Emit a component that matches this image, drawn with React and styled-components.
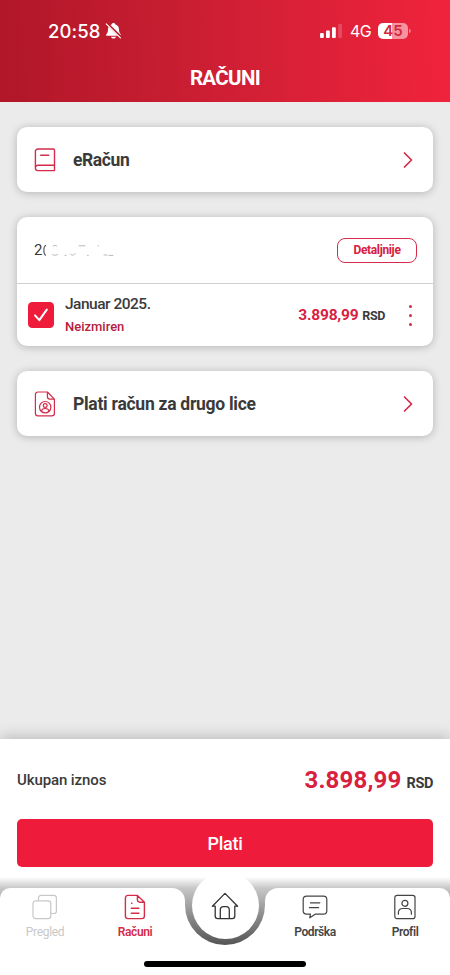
import React, { useState } from 'react'
import styled, { createGlobalStyle } from 'styled-components';

const red = '#ee1b3b';
const redText = '#d8203f';
const redLine = '#d42c4a';
const dark = '#3a3a3a';

const GlobalStyle = createGlobalStyle`
  * {
    box-sizing: border-box;
  }
  body {
    margin: 0;
    background-color: #ebebeb;
    font-family: Roboto, 'Noto Sans', sans-serif;
    color: ${dark};
  }
  button {
    font-family: inherit;
    padding: 0;
    border: none;
    background: none;
    cursor: pointer;
  }
`
const Screen = styled.div`
  width: 450px;
  height: 975px;
  margin: 0 auto;
  display: flex;
  flex-direction: column;
  overflow: hidden;
  background-color: #ebebeb;
`
const Header = styled.header`
  height: 102px;
  flex-shrink: 0;
  background: linear-gradient(88deg, #b01728 0%, #cf1f34 50%, #f0233c 100%);
  color: white;
`
const StatusBar = styled.div`
  height: 61px;
  padding: 0 39px 0 48px;
  display: flex;
  align-items: center;
  justify-content: space-between;
  font-family: Inter, sans-serif;
`
const StatusGroup = styled.div`
  display: flex;
  align-items: center;
  gap: ${props => props.$gap}px;
`
const Clock = styled.span`
  font-size: 18.5px;
  font-weight: 500;
  letter-spacing: 0.1px;
`
const Network = styled.span`
  font-size: 16px;
  letter-spacing: -0.6px;
`
const Battery = styled.span`
  width: 30px;
  height: 16px;
  border-radius: 5px;
  background: linear-gradient(90deg, white 46%, #f7929e 46%);
  color: #cf2740;
  font-size: 15px;
  font-weight: 600;
  line-height: 16px;
  text-align: center;
`
const Title = styled.h1`
  margin: 0;
  padding-top: 5px;
  font-size: 20.5px;
  line-height: 24px;
  font-weight: 700;
  text-align: center;
  letter-spacing: -0.65px;
`
const Content = styled.main`
  flex: 1;
  padding: 25px 17px;
  display: flex;
  flex-direction: column;
  gap: 25px;
`
const Card = styled.section`
  background-color: white;
  border-radius: 10px;
  box-shadow: 0 1px 9px rgba(0,0,0,0.24);
`
const LinkCard = styled(Card)`
  height: 65px;
  padding: 0 20px 0 17px;
  display: flex;
  align-items: center;
`
const LinkText = styled.span`
  flex: 1;
  padding: 1px 0 0 17px;
  font-size: 17.5px;
  font-weight: 700;
  letter-spacing: ${props => props.$spacing}px;
`
const AccountRow = styled.div`
  height: 67px;
  padding: 0 16px 0 17px;
  display: flex;
  align-items: center;
  justify-content: space-between;
  border-bottom: 1px solid #cfcfcf;
`
const AccountNumber = styled.div`
  display: flex;
  align-items: center;
  font-size: 15px;
`
const DetailsButton = styled.button`
  width: 80px;
  height: 25px;
  border: 1px solid ${redLine};
  border-radius: 8px;
  color: ${redText};
  font-size: 12px;
  font-weight: 700;
  letter-spacing: -0.35px;
`
const BillRow = styled.div`
  height: 62px;
  padding: 0 16px 0 11px;
  display: flex;
  align-items: center;
`
const CheckBox = styled.button`
  width: 26px;
  height: 26px;
  border-radius: 4px;
  display: flex;
  align-items: center;
  justify-content: center;
  background-color: ${props => props.$checked ? red : 'white'};
  border: 1px solid ${red};
`
const BillInfo = styled.div`
  flex: 1;
  padding-left: 11px;
  display: flex;
  flex-direction: column;
`
const BillMonth = styled.span`
  font-size: 15.5px;
  line-height: 22px;
  font-weight: 500;
  letter-spacing: -0.5px;
`
const BillStatus = styled.span`
  padding-top: 1px;
  font-size: 13px;
  line-height: 21px;
  font-weight: 500;
  color: #b5203f;
`
const Amount = styled.span`
  color: ${redText};
  font-size: ${props => props.$size}px;
  font-weight: 700;
  letter-spacing: ${props => props.$spacing}px;
`
const Currency = styled.span`
  padding-left: ${props => props.$gap}px;
  color: ${dark};
  font-size: ${props => props.$size}px;
  font-weight: 700;
  letter-spacing: -0.4px;
`
const MoreButton = styled.button`
  margin-left: 18px;
  width: 14px;
  height: 26px;
  display: flex;
  flex-direction: column;
  align-items: center;
  justify-content: center;
  gap: 6px;
`
const Dot = styled.span`
  width: 3px;
  height: 3px;
  border-radius: 50%;
  background-color: ${redLine};
`
const PayPanel = styled.section`
  height: 138px;
  flex-shrink: 0;
  padding: 16px 17px 0;
  background-color: white;
  box-shadow: 0 -2px 14px rgba(0,0,0,0.22);
`
const TotalRow = styled.div`
  height: 49px;
  display: flex;
  align-items: center;
  justify-content: space-between;
`
const TotalLabel = styled.span`
  font-size: 15px;
  font-weight: 500;
  letter-spacing: -0.1px;
`
const PayButton = styled.button`
  margin-top: 15px;
  width: 100%;
  height: 48px;
  border-radius: 5px;
  background-color: ${red};
  color: white;
  font-size: 18px;
  font-weight: 500;
  letter-spacing: -0.3px;
`
const NavShade = styled.footer`
  height: 98px;
  flex-shrink: 0;
  padding-top: 11px;
  background: linear-gradient(180deg, white 0, #c8c8c8 11px, #a0a0a0 28px, white 28px);
`
const NavBar = styled.nav`
  height: 65px;
  display: grid;
  grid-template-columns: 185px 80px 185px;
`
const TabGroup = styled.div`
  display: grid;
  grid-template-columns: 90px 90px;
  justify-content: ${props => props.$end ? 'end' : 'start'};
  padding: ${props => props.$end ? '0 0 0 5px' : '0 5px 0 0'};
  background-color: white;
  border-radius: ${props => props.$end ? '13px 10px 0 0' : '10px 13px 0 0'};
`
const Tab = styled.button`
  padding-top: 6px;
  display: flex;
  flex-direction: column;
  align-items: center;
  gap: 3px;
  color: ${props => props.$color};
  font-size: 12px;
  line-height: 18px;
  font-weight: ${props => props.$light ? 400 : 600};
  letter-spacing: ${props => props.$light ? -0.3 : -0.4}px;
`
const HomeSlot = styled.div`
  background: linear-gradient(180deg, #c8c8c8 0, #a0a0a0 17px, white 17px);
`
const HomeNotch = styled.div`
  height: 57px;
  border-radius: 0 0 40px 40px;
  background: linear-gradient(180deg, #c8c8c8, #8a8a8a 50%, #555555);
  display: flex;
  justify-content: center;
`
const HomeButton = styled.button`
  width: 67px;
  height: 67px;
  margin-top: -16px;
  flex-shrink: 0;
  border-radius: 50%;
  background-color: white;
  display: flex;
  align-items: center;
  justify-content: center;
`
const HomeIndicator = styled.div`
  width: 162px;
  height: 6px;
  margin: 8px auto 0;
  border-radius: 3px;
  background-color: black;
`

const Icon = ({ w, h, color = 'currentColor', width = 1.2, children }) => (
  <svg width={w} height={h} viewBox={`0 0 ${w} ${h}`} fill="none" stroke={color}
    strokeWidth={width} strokeLinecap="round" strokeLinejoin="round">
    {children}
  </svg>
)

const BellOff = () => (
  <Icon w={17} h={18} color="none">
    <path fill="white" d="M8.500 1c1 0 1.700.6 1.900 1.400 2.400.7 3.600 2.500 3.600 4.900 0 2.700.5 3.800 1.600 4.900.6.6.3 1.600-.6 1.600H2c-.9 0-1.200-1-.6-1.600C2.500 11.100 3 10 3 7.300c0-2.400 1.200-4.200 3.600-4.900C6.800 1.600 7.500 1 8.500 1z" />
    <path fill="white" d="M6 14.700h5c-.2 1-1.200 1.800-2.500 1.800S6.200 15.700 6 14.700z" />
    <path stroke="#bf1b2e" strokeWidth="2.600" d="M1.600 1.300L16 15.200" />
    <path stroke="white" strokeWidth="1.200" d="M1.200 1.900L15.400 15.900" />
  </Icon>
)

const Signal = () => (
  <Icon w={24} h={16} color="none">
    <rect x="1" y="10" width="3.800" height="5" rx="1.100" fill="white" />
    <rect x="7" y="7.500" width="3.800" height="7.500" rx="1.100" fill="white" />
    <rect x="13" y="4.200" width="3.800" height="10.800" rx="1.100" fill="white" />
    <rect x="19.200" y="1" width="3.800" height="14" rx="1.100" fill="#e44a60" />
  </Icon>
)

const BatteryTip = () => (
  <Icon w={2} h={6} color="none">
    <path d="M0 .8c1.2.4 1.8 1.200 1.8 2.200S1.200 4.800 0 5.200z" fill="#f58694" />
  </Icon>
)

const BookIcon = () => (
  <Icon w={22} h={26} color={redLine} width={1.4}>
    <path d="M20.500 18.300V3.200c0-.7-.5-1.200-1.200-1.200H4C2.500 2 1.400 3.100 1.400 4.600V21c0 1.500 1.100 2.600 2.600 2.600h16.500v-5.300H4C2.600 18.300 1.400 19.400 1.400 20.800M6.700 8.200h8" />
  </Icon>
)

const PersonFileIcon = () => (
  <Icon w={22} h={26} color={redLine}>
    <path d="M13.400 1H4C2.500 1 1.400 2.100 1.400 3.600v18.600c0 1.500 1.100 2.600 2.600 2.600h13.800c1.500 0 2.600-1.100 2.600-2.600V8.200zM13.400 1v4.600c0 1.500 1.100 2.600 2.600 2.600h4.400" />
    <circle cx="11.200" cy="16.200" r="5.700" />
    <circle cx="11.200" cy="14.500" r="1.900" />
    <path d="M7.400 20.200c.3-1.800 1.700-2.700 3.800-2.700s3.500.9 3.800 2.700" />
  </Icon>
)

const Chevron = () => (
  <Icon w={10} h={18} color={redLine} width={1.7}>
    <path d="M1.500 2l7 7-7 7" />
  </Icon>
)

const CheckIcon = () => (
  <Icon w={16} h={14} color="white" width={2}>
    <path d="M2 7.400l4.300 4.800L13.800 1.600" />
  </Icon>
)

// leftover strokes of the masked account digits
const MaskedDigits = () => (
  <Icon w={74} h={14} color="#b0b0b0" width={0.9}>
    <path stroke="#555" strokeWidth="1.100" d="M3.600 2.400C1.400 3.400 1.200 10.600 3.400 12.200" />
    <path d="M11 3.200c1.200-1.300 3-1.300 4 0M10.500 11.600c1.500 1 4 1 5.300-.4M23 12.400h1M28.500 11c1.200 1.700 3.600 1.500 4.700-.4M37 2.800h6M45.500 12.400h.8M62 12h3M67 12.400h4M56 2.800h.5" />
  </Icon>
)

const OverviewIcon = () => (
  <Icon w={26} h={26}>
    <rect x="1" y="6.800" width="17.800" height="17.800" rx="2.600" />
    <path d="M6.500 6.600V4c0-1.500 1.100-2.600 2.600-2.600h12.700c1.500 0 2.600 1.100 2.600 2.600v12.900c0 1.500-1.100 2.600-2.600 2.600h-2.600" />
  </Icon>
)

const BillIcon = () => (
  <Icon w={22} h={26} width={1.400}>
    <path d="M13.400 1.400H4c-1.500 0-2.600 1.100-2.600 2.600v18c0 1.500 1.100 2.600 2.600 2.600h13.800c1.500 0 2.600-1.100 2.600-2.600V8.200zM13.400 1.400v4.200c0 1.500 1.100 2.600 2.600 2.600h4.400M7.600 9.200h.4M7.300 14.300h7.600M7.300 19.200h7.600" />
  </Icon>
)

const HomeIcon = () => (
  <Icon w={28} h={28} color="#333" width={1.3}>
    <path d="M1.400 14.200L14 1.400l12.600 12.800M1.400 14.200h2.800V24c0 1.500 1.100 2.600 2.600 2.600h14.400c1.500 0 2.600-1.100 2.600-2.600v-9.800h2.800M9.300 26.500v-8.700c0-2 1.300-3.200 3.200-3.200h2.600c1.900 0 3.200 1.200 3.200 3.200v8.700" />
  </Icon>
)

const ChatIcon = () => (
  <Icon w={26} h={26}>
    <path d="M4.600 2.200h16.800c2 0 3.400 1.400 3.400 3.400v11.200c0 2-1.400 3.400-3.400 3.400h-8.200L7.800 23.800l.6-3.600H4.600c-2 0-3.400-1.400-3.400-3.400V5.600c0-2 1.400-3.400 3.400-3.400zM8.400 8.800h9.400M7.400 13.600h9.200" />
  </Icon>
)

const ProfileIcon = () => (
  <Icon w={22} h={26}>
    <rect x=".8" y="1.400" width="20.200" height="23.200" rx="2.200" />
    <circle cx="10.900" cy="9.300" r="3" />
    <path d="M4.400 20.200v-1.400c0-2.700 1.700-4.300 4.300-4.300h4.400c2.600 0 4.300 1.600 4.300 4.300v1.400" />
  </Icon>
)

const App = () => {
  const [checked, setChecked] = useState(true)

  return (
    <Screen>
      <GlobalStyle/>
      <Header>
        <StatusBar>
          <StatusGroup $gap={4}>
            <Clock>20:58</Clock>
            <BellOff/>
          </StatusGroup>
          <StatusGroup $gap={7}>
            <Signal/>
            <Network>4G</Network>
            <StatusGroup $gap={1}>
              <Battery>45</Battery>
              <BatteryTip/>
            </StatusGroup>
          </StatusGroup>
        </StatusBar>
        <Title>RAČUNI</Title>
      </Header>

      <Content>
        <LinkCard>
          <BookIcon/>
          <LinkText $spacing={-0.4}>eRačun</LinkText>
          <Chevron/>
        </LinkCard>

        <Card>
          <AccountRow>
            <AccountNumber>
              2
              <MaskedDigits/>
            </AccountNumber>
            <DetailsButton>Detaljnije</DetailsButton>
          </AccountRow>
          <BillRow>
            <CheckBox $checked={checked} onClick={()=>setChecked(!checked)}>
              {checked && <CheckIcon/>}
            </CheckBox>
            <BillInfo>
              <BillMonth>Januar 2025.</BillMonth>
              <BillStatus>Neizmiren</BillStatus>
            </BillInfo>
            <Amount $size={15.5} $spacing={-0.2}>
              3.898,99<Currency $size={12.5} $gap={4}>RSD</Currency>
            </Amount>
            <MoreButton>
              <Dot/>
              <Dot/>
              <Dot/>
            </MoreButton>
          </BillRow>
        </Card>

        <LinkCard>
          <PersonFileIcon/>
          <LinkText $spacing={-0.27}>Plati račun za drugo lice</LinkText>
          <Chevron/>
        </LinkCard>
      </Content>

      <PayPanel>
        <TotalRow>
          <TotalLabel>Ukupan iznos</TotalLabel>
          <Amount $size={24} $spacing={0.2}>
            3.898,99<Currency $size={14.5} $gap={5}>RSD</Currency>
          </Amount>
        </TotalRow>
        <PayButton>Plati</PayButton>
      </PayPanel>

      <NavShade>
        <NavBar>
          <TabGroup>
            <Tab $color="#c8c8c8" $light><OverviewIcon/>Pregled</Tab>
            <Tab $color={redLine}><BillIcon/>Računi</Tab>
          </TabGroup>
          <HomeSlot>
            <HomeNotch>
              <HomeButton><HomeIcon/></HomeButton>
            </HomeNotch>
          </HomeSlot>
          <TabGroup $end>
            <Tab $color="#444"><ChatIcon/>Podrška</Tab>
            <Tab $color="#444"><ProfileIcon/>Profil</Tab>
          </TabGroup>
        </NavBar>
        <HomeIndicator/>
      </NavShade>
    </Screen>
  )
}

export default App
